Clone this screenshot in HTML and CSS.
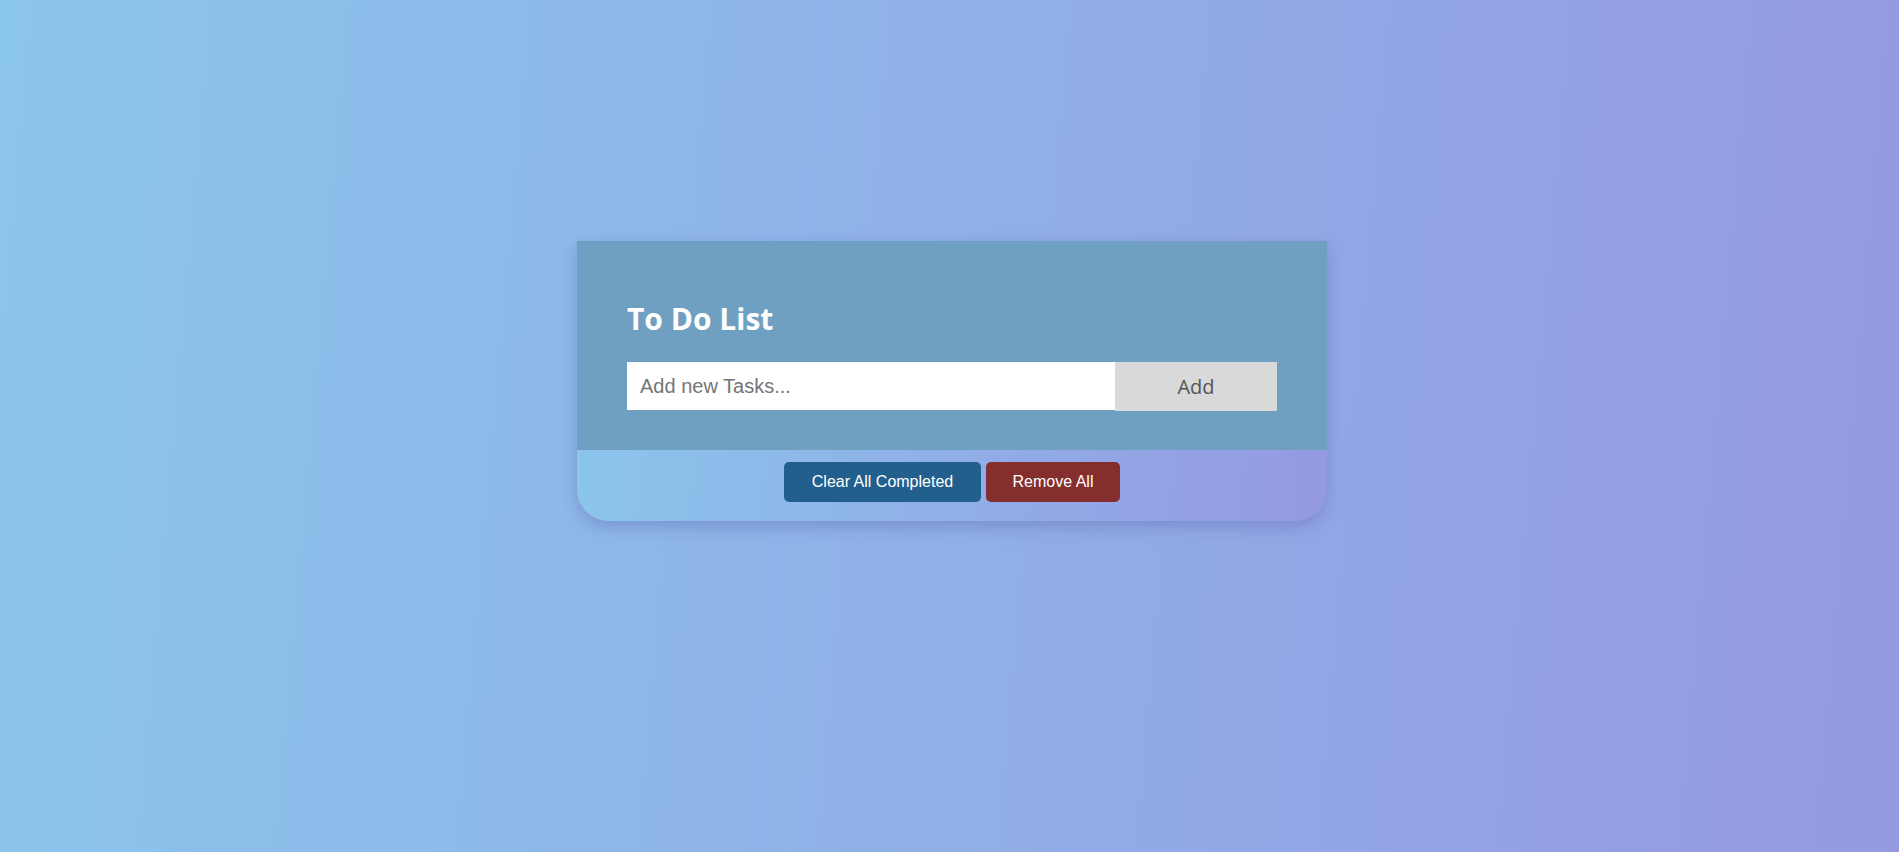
FILE: index.html
```html
<!DOCTYPE html>
<html>
<head>
<meta charset="utf-8">
<title>To Do List</title>
<link rel="stylesheet" href="styles.css">
</head>
<body>
<div class="page">
  <div class="card">
    <div class="card-top">
      <h1 class="title">To Do List</h1>
      <div class="entry">
        <input class="entry-input" type="text" placeholder="Add new Tasks...">
        <button class="entry-add">Add</button>
      </div>
    </div>
    <div class="card-bottom">
      <button class="btn btn-clear">Clear All Completed</button>
      <button class="btn btn-remove">Remove All</button>
    </div>
  </div>
</div>
</body>
</html>
```

FILE: styles.css
```css
html, body {
  margin: 0;
  padding: 0;
  height: 100%;
}
body {
  background: linear-gradient(95deg, #8bc6ec 0%, #9599e2 100%);
  font-family: "Liberation Sans", Arial, sans-serif;
}
.page {
  height: 852px;
  display: flex;
  justify-content: center;
  align-items: flex-start;
  padding: 241px 0 0 5px;
  box-sizing: border-box;
}
.card {
  width: 750px;
  border-radius: 0 0 32px 32px;
  overflow: hidden;
  box-shadow: 0 6px 16px rgba(80, 90, 160, 0.35);
  background: linear-gradient(95deg, #8bc6ec 0%, #9599e2 100%);
}
.card-top {
  background: #70a0c1;
  padding: 50px 50px 38px;
  height: 209px;
  box-sizing: border-box;
}
.title {
  margin: 0 0 21px;
  color: #fff;
  font-family: "Open Sans", "Noto Sans", sans-serif;
  font-weight: 700;
  font-size: 30px;
  line-height: 44px;
  padding-top: 6px;
}
.entry {
  display: flex;
}
.entry-input {
  flex: 0 0 488px;
  height: 48px;
  border: none;
  outline: none;
  padding: 0 13px;
  box-sizing: border-box;
  font-family: "Liberation Sans", Arial, sans-serif;
  font-size: 20px;
  color: #333;
  background: #fff;
}
.entry-input::placeholder {
  color: #757575;
}
.entry-add {
  flex: 0 0 162px;
  height: 49px;
  border: none;
  background: #d9d9d9;
  color: #555;
  font-family: "Open Sans", "Noto Sans", sans-serif;
  font-size: 20px;
  padding: 0;
}
.card-bottom {
  display: flex;
  justify-content: center;
  gap: 5px;
  padding: 12px 0 19px;
}
.btn {
  height: 40px;
  border: none;
  border-radius: 5px;
  color: #fff;
  font-family: "Liberation Sans", Arial, sans-serif;
  font-size: 16px;
  padding: 0;
}
.btn-clear {
  width: 197px;
  background: #235f8d;
}
.btn-remove {
  width: 134px;
  background: #842e2e;
}
```
